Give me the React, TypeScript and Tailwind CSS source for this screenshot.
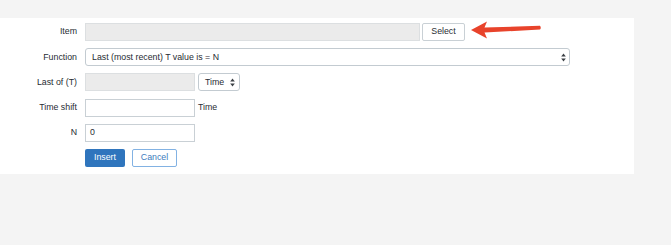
import { ReactNode } from 'react'

const font = { fontFamily: '"Liberation Sans", Arial, sans-serif' }

function Updown() {
  return (
    <svg width="5" height="9" viewBox="0 0 5 9" className="shrink-0">
      <path d="M2.5 0.5 L4.8 3.6 L0.2 3.6 Z" fill="#3a3f44" />
      <path d="M2.5 8.5 L4.8 5.4 L0.2 5.4 Z" fill="#3a3f44" />
    </svg>
  )
}

function Row({ label, children }: { label: string; children: ReactNode }) {
  return (
    <div className="flex items-center h-[18px]">
      <div className="w-[77px] text-right text-[#1f2c33]">{label}</div>
      <div className="ml-[8px] flex items-center h-full">{children}</div>
    </div>
  )
}

export default function App() {
  return (
    <div className="w-[671px] h-[245px] bg-[#f4f4f4] pt-[18px] relative text-[8.8px]" style={font}>
      <div className="w-[634px] h-[156px] bg-white pt-[5px] flex flex-col gap-[7.2px]">
        <Row label="Item">
          <div className="w-[335px] h-[18px] bg-[#ebebeb] border border-[#dcdfe1]" />
          <button className="ml-[2px] w-[43px] h-[18px] bg-white border border-[#c9d0d5] rounded-[2px] text-[#1f2c33]">
            Select
          </button>
        </Row>
        <Row label="Function">
          <div className="w-[485px] h-[18px] bg-white border border-[#c3cbd1] rounded-[3px] flex items-center justify-between pl-[6px] pr-[3px] text-[#1f2c33]">
            <span>Last (most recent) T value is = N</span>
            <Updown />
          </div>
        </Row>
        <Row label="Last of (T)">
          <div className="w-[110px] h-[18px] bg-[#ebebeb] border border-[#dcdfe1]" />
          <div className="ml-[3px] w-[42px] h-[18px] bg-white border border-[#c3cbd1] rounded-[3px] flex items-center justify-between pl-[6px] pr-[4px] text-[#1f2c33]">
            <span>Time</span>
            <Updown />
          </div>
        </Row>
        <Row label="Time shift">
          <div className="w-[110px] h-[18px] bg-white border border-[#c9d0d5]" />
          <span className="ml-[3px] text-[#1f2c33]">Time</span>
        </Row>
        <Row label="N">
          <div className="w-[110px] h-[18px] bg-white border border-[#c9d0d5] pl-[4px] flex items-center text-[#1f2c33]">0</div>
        </Row>
        <Row label="">
          <button className="w-[40px] h-[18px] bg-[#2f75bd] rounded-[2px] text-white">Insert</button>
          <button className="ml-[7px] w-[45px] h-[18px] bg-white border border-[#82b2e3] rounded-[2px] text-[#3d7bbd]">
            Cancel
          </button>
        </Row>
      </div>
      <svg className="absolute left-[470px] top-[20px]" width="72" height="20" viewBox="0 0 72 20">
        <path d="M1 10 L17 1.5 L14.5 7.6 L70 5.8 Q71.5 7.6 70 9.6 L14.5 12.6 L17 18.5 Z" fill="#e8432b" />
      </svg>
    </div>
  )
}
